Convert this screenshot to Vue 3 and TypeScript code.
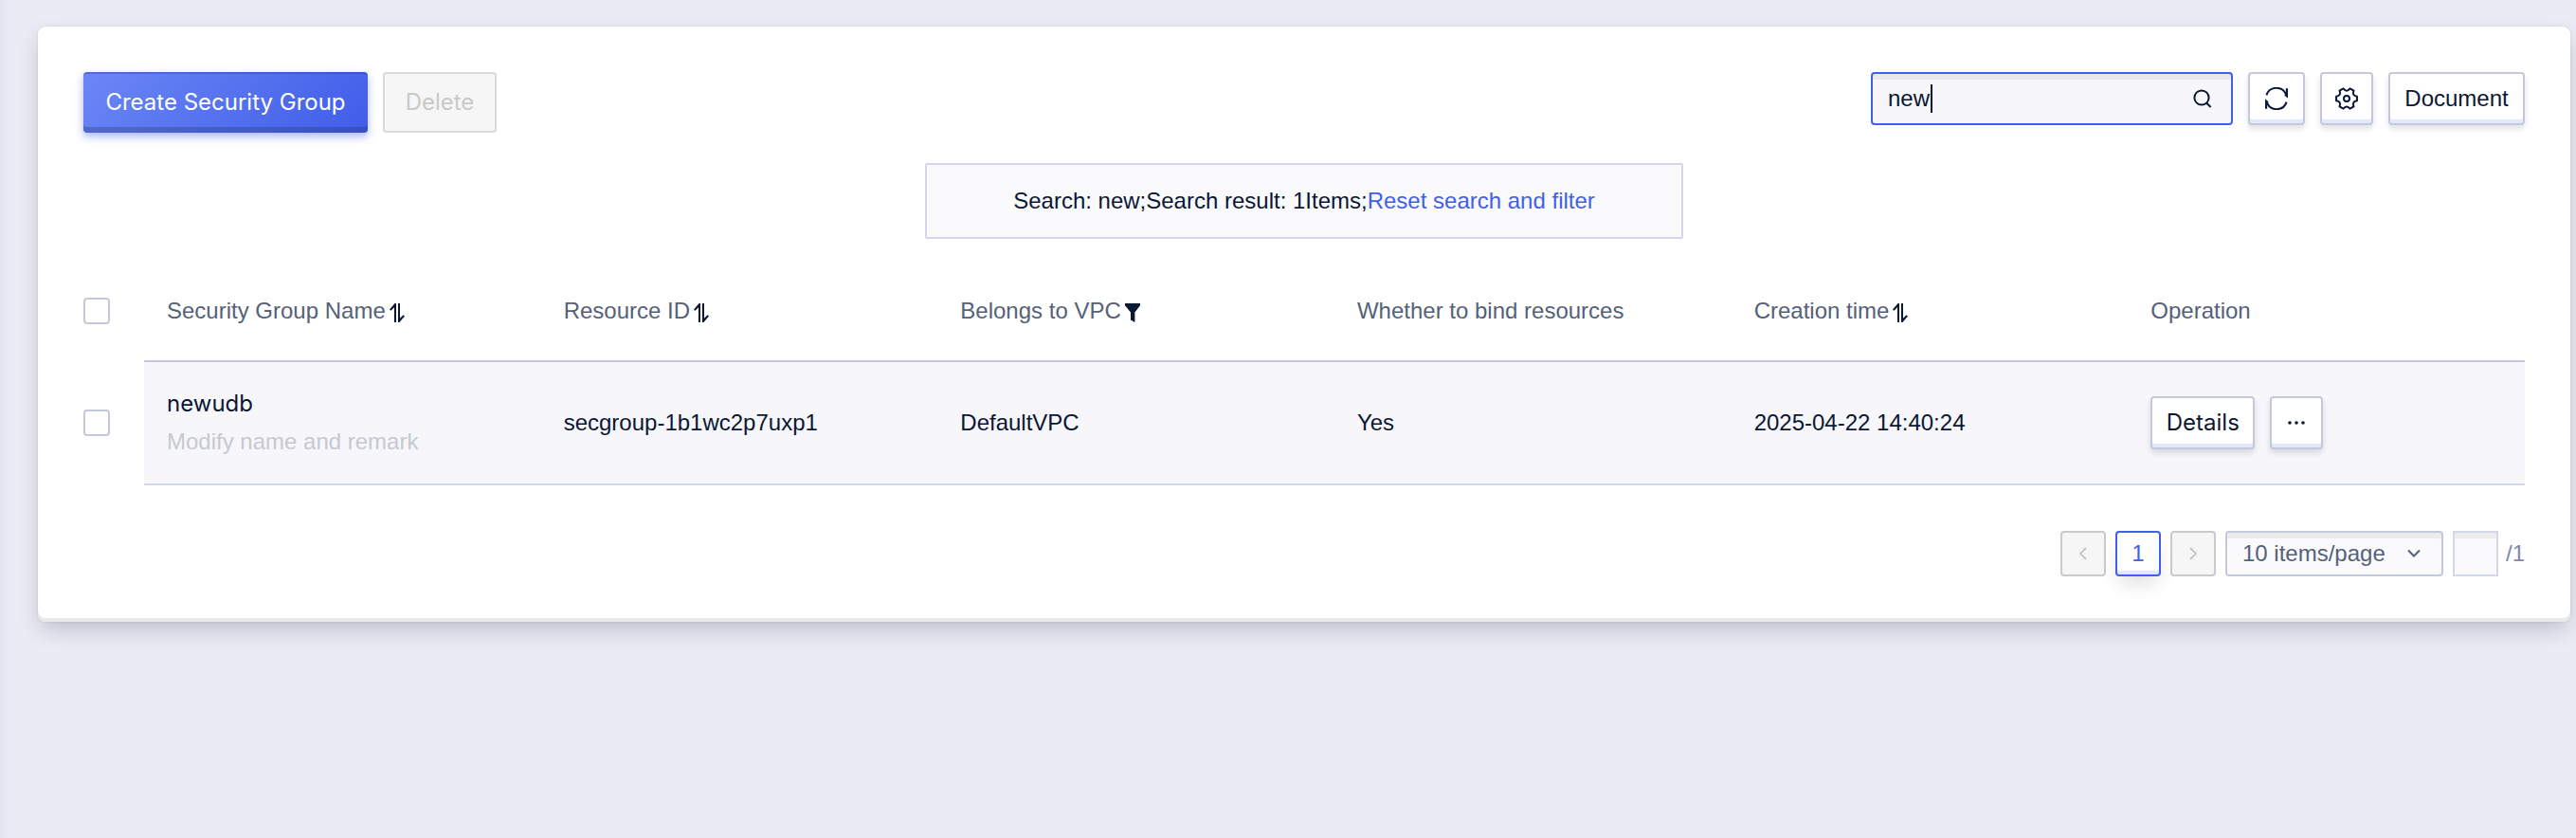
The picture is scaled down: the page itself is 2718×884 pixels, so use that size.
<script setup lang="ts">
import { ref, computed, onMounted, watch } from 'vue'

interface Column {
  key: string
  label: string
  icon?: 'sort' | 'filter'
}

interface SecurityGroup {
  name: string
  id: string
  vpc: string
  bound: string
  created: string
  checked: boolean
}

const columns: Column[] = [
  { key: 'name', label: 'Security Group Name', icon: 'sort' },
  { key: 'id', label: 'Resource ID', icon: 'sort' },
  { key: 'vpc', label: 'Belongs to VPC', icon: 'filter' },
  { key: 'bound', label: 'Whether to bind resources' },
  { key: 'created', label: 'Creation time', icon: 'sort' },
  { key: 'operation', label: 'Operation' },
]

const groups = ref<SecurityGroup[]>([
  {
    name: 'newudb',
    id: 'secgroup-1b1wc2p7uxp1',
    vpc: 'DefaultVPC',
    bound: 'Yes',
    created: '2025-04-22 14:40:24',
    checked: false,
  },
])

const keyword = ref('new')
const pageSize = ref(10)
const jumpTo = ref('')
const searchInput = ref<HTMLInputElement | null>(null)
const caretLeft = ref(0)
const focused = ref(false)

const visible = computed(() => groups.value.filter((g) => g.name.includes(keyword.value)))
const allChecked = computed({
  get: () => visible.value.length > 0 && visible.value.every((g) => g.checked),
  set: (value: boolean) => visible.value.forEach((g) => (g.checked = value)),
})
const noneChecked = computed(() => !groups.value.some((g) => g.checked))

// Places the custom caret behind the text that precedes the selection.
function placeCaret() {
  const el = searchInput.value
  const ctx = document.createElement('canvas').getContext('2d')
  if (!el || !ctx) return
  ctx.font = getComputedStyle(el).font
  const before = el.value.slice(0, el.selectionEnd ?? el.value.length)
  caretLeft.value = Math.ceil(ctx.measureText(before).width)
}

watch(keyword, placeCaret, { flush: 'post' })

onMounted(() => {
  const el = searchInput.value
  if (el) {
    el.focus()
    el.setSelectionRange(el.value.length, el.value.length)
    focused.value = true
    placeCaret()
  }
})
</script>

<template>
  <main class="page">
    <section class="card">
      <div class="toolbar">
        <div class="group">
          <button type="button" class="primary">Create Security Group</button>
          <button type="button" class="disabled-btn" :disabled="noneChecked">Delete</button>
        </div>
        <div class="group tools">
          <div class="search">
            <div class="field">
              <input
                ref="searchInput"
                v-model="keyword"
                type="text"
                aria-label="Search"
                @focus="focused = true"
                @blur="focused = false"
                @keyup="placeCaret"
                @click="placeCaret"
              />
              <span v-if="focused" class="caret" :style="{ left: caretLeft + 'px' }"></span>
            </div>
            <button type="button" class="search-btn" aria-label="Search">
              <svg width="20" height="20" viewBox="0 0 20 20" fill="none" stroke="currentColor" stroke-width="2">
                <circle cx="9" cy="9" r="7.6" />
                <path d="M14 14.5 18.6 19" />
              </svg>
            </button>
          </div>
          <button type="button" class="btn refresh" aria-label="Refresh">
            <svg width="24" height="24" viewBox="0 0 24 24" fill="none" stroke="currentColor" stroke-width="2">
              <path d="M1.4 8.4A11 11 0 0 1 22 7.6M22.6 15.6A11 11 0 0 1 2 16.4" />
              <path d="M21.8 1.2H24V11.6L20.4 8.8 21.8 7ZM2.2 22.8H0V12.4L3.6 15.2 2.2 17Z" fill="currentColor" stroke="none" />
            </svg>
          </button>
          <button type="button" class="btn settings" aria-label="Settings">
            <svg width="24" height="24" viewBox="0 0 24 24" fill="none" stroke="currentColor" stroke-width="2" stroke-linejoin="round">
              <path d="M22.96 14.33Q17.28 15.05 19.49 20.32L15.46 22.65Q12 18.1 8.54 22.65L4.51 20.32Q6.72 15.05 1.04 14.33V9.67Q6.72 8.95 4.51 3.68L8.54 1.35Q12 5.9 15.46 1.35L19.49 3.68Q17.28 8.95 22.96 9.67Z" />
              <circle cx="12" cy="12" r="3" />
            </svg>
          </button>
          <button type="button" class="btn document">Document</button>
        </div>
      </div>

      <p class="notice">
        Search: {{ keyword }};Search result: {{ visible.length }}Items;<a href="#" @click.prevent="keyword = ''">Reset search and filter</a>
      </p>

      <table>
        <thead>
          <tr>
            <th class="select-cell"><input v-model="allChecked" type="checkbox" aria-label="Select all" /></th>
            <th v-for="col in columns" :key="col.key" scope="col">
              <span class="head">
                {{ col.label }}
                <button v-if="col.icon" type="button" class="head-btn" :aria-label="`${col.icon} ${col.label}`">
                  <svg v-if="col.icon === 'sort'" width="16" height="20" viewBox="0 0 16 20" fill="currentColor">
                    <path d="M7 0V20H5V4.2L1.4 7.8 0 6.4 5.6 0ZM9 20V0H11V15.8L14.6 12.2 16 13.6 10.4 20Z" />
                  </svg>
                  <svg v-else width="16" height="20" viewBox="0 0 16 20" fill="currentColor">
                    <path d="M0 0H16V2.2L10.4 9.4V20L6 17.6V9.4L0 2.2Z" />
                  </svg>
                </button>
              </span>
            </th>
          </tr>
        </thead>
        <tbody>
          <tr v-for="g in visible" :key="g.id">
            <td class="select-cell"><input v-model="g.checked" type="checkbox" :aria-label="`Select ${g.name}`" /></td>
            <td>
              <div class="name">{{ g.name }}</div>
              <div class="remark">Modify name and remark</div>
            </td>
            <td>{{ g.id }}</td>
            <td>{{ g.vpc }}</td>
            <td>{{ g.bound }}</td>
            <td>{{ g.created }}</td>
            <td>
              <div class="group">
                <button type="button" class="btn details">Details</button>
                <button type="button" class="btn more" aria-label="More">
                  <svg width="18" height="4" viewBox="0 0 18 4" fill="currentColor">
                    <circle cx="2" cy="2" r="1.8" />
                    <circle cx="9" cy="2" r="1.8" />
                    <circle cx="16" cy="2" r="1.8" />
                  </svg>
                </button>
              </div>
            </td>
          </tr>
        </tbody>
      </table>

      <nav class="pager" aria-label="Pagination">
        <button type="button" class="page-btn" disabled aria-label="Previous page">
          <svg width="8" height="14" viewBox="0 0 8 14" fill="none" stroke="currentColor" stroke-width="2"><path d="M7 1 1 7 7 13" /></svg>
        </button>
        <button type="button" class="page-btn current" aria-current="page">1</button>
        <button type="button" class="page-btn" disabled aria-label="Next page">
          <svg width="8" height="14" viewBox="0 0 8 14" fill="none" stroke="currentColor" stroke-width="2"><path d="M1 1 7 7 1 13" /></svg>
        </button>
        <div class="size">
          <select v-model="pageSize" aria-label="Items per page">
            <option :value="10">10 items/page</option>
            <option :value="20">20 items/page</option>
            <option :value="50">50 items/page</option>
          </select>
          <svg width="14" height="10" viewBox="0 0 14 10" fill="none" stroke="currentColor" stroke-width="2"><path d="M1 1.5 7 7.5 13 1.5" /></svg>
        </div>
        <div class="jump-group">
          <input id="jump" v-model="jumpTo" class="jump" type="text" />
          <label class="total" for="jump">/1</label>
        </div>
      </nav>
    </section>
  </main>
</template>

<style>
html,
body {
  min-height: 100%;
  background: #eaebf4;
}
</style>

<style scoped>
.page {
  box-sizing: border-box;
  min-height: 100vh;
  padding: 28px 6px 28px 40px;
  background: linear-gradient(90deg, #e0e3f0, #eaebf4 8px);
  color: #0b1733;
  font-family: "Liberation Sans", Arial, sans-serif;
  font-size: 24px;
  line-height: 32px;
}

.page *,
.page *::before {
  box-sizing: border-box;
}

button,
input,
select {
  margin: 0;
  color: inherit;
  font: inherit;
}

svg {
  display: block;
  flex: none;
}

.card {
  padding: 48px;
  border-radius: 8px;
  background: #fff;
  box-shadow: inset 0 -4px 0 #e9e9e9, 0 0 2px rgba(30, 40, 80, 0.16), 0 10px 24px -4px rgba(20, 25, 50, 0.24);
}

.toolbar {
  display: flex;
  align-items: flex-start;
  justify-content: space-between;
}

.group {
  display: flex;
  gap: 16px;
}

.primary,
.disabled-btn,
.details,
.name {
  font-family: Inter, "Liberation Sans", sans-serif;
}

.primary,
.disabled-btn {
  height: 64px;
  border-radius: 4px;
  white-space: nowrap;
}

.primary {
  min-width: 300px;
  padding: 0 20px;
  border: 0;
  background: linear-gradient(135deg, #6c87f5, #3f5de9);
  color: #fff;
  box-shadow: inset 0 2px 0 rgba(40, 50, 110, 0.3), inset 0 -6px 0 rgba(40, 50, 110, 0.3), 0 4px 8px rgba(65, 90, 235, 0.45);
}

.disabled-btn {
  min-width: 120px;
  padding: 0 20px;
  border: 2px solid #d9d9d9;
  background: #f6f6f6;
  color: #c9c9c9;
}

.btn {
  display: flex;
  align-items: center;
  justify-content: center;
  height: 56px;
  padding: 0;
  border: 2px solid #c3c9da;
  border-radius: 4px;
  background: #fff;
  color: #0b1733;
  box-shadow: inset 0 -4px 0 #e3e8fd, 0 4px 6px rgba(0, 0, 0, 0.12);
}

.refresh {
  width: 60px;
}

.settings,
.more {
  width: 56px;
}

.document {
  min-width: 144px;
}

.details {
  min-width: 110px;
}

.search {
  display: flex;
  align-items: center;
  width: 382px;
  height: 56px;
  padding: 0 20px 0 16px;
  border: 2px solid #3f5fec;
  border-radius: 4px;
  background: #f6f6fb;
  box-shadow: inset 0 6px 0 #e8e8ed;
}

.field {
  position: relative;
  flex: 1;
  min-width: 0;
}

.field input {
  display: block;
  width: 100%;
  height: 44px;
  padding: 0;
  border: 0;
  outline: 0;
  background: transparent;
  caret-color: transparent;
}

.caret {
  position: absolute;
  top: 7px;
  width: 2px;
  height: 30px;
  background: #0b1733;
}

.search-btn,
.head-btn {
  padding: 0;
  border: 0;
  background: none;
}

.notice {
  width: 800px;
  max-width: 100%;
  margin: 32px auto 24px;
  padding: 22px;
  border: 2px solid #d3d7ea;
  border-radius: 2px;
  background: #fafafd;
  text-align: center;
}

.notice a {
  color: #3f5fec;
  text-decoration: none;
}

table {
  width: 100%;
  border-collapse: separate;
  border-spacing: 0;
  table-layout: fixed;
}

th,
td {
  padding: 0 24px;
  border-bottom: 2px solid #d3d7ea;
  text-align: left;
}

th {
  height: 106px;
  border-color: #c3c9da;
  color: #556179;
  font-weight: 400;
}

td {
  height: 130px;
  background: #f6f6fb;
}

.select-cell {
  width: 64px;
  padding: 0;
  border-color: transparent;
  background: none;
}

input[type="checkbox"] {
  display: block;
  width: 28px;
  height: 28px;
  border: 2px solid #c3c9da;
  border-radius: 4px;
  background: #fff;
  appearance: none;
}

input[type="checkbox"]:checked {
  border-color: #3f5fec;
  background: #3f5fec;
}

.head {
  display: flex;
  align-items: center;
  gap: 4px;
  white-space: nowrap;
}

.head-btn {
  padding-top: 4px;
  color: #0b1733;
}

.remark {
  margin-top: 8px;
  color: #c6c9d2;
}

.pager {
  display: flex;
  justify-content: flex-end;
  gap: 10px;
  margin-top: 48px;
  line-height: 48px;
}

.page-btn {
  display: flex;
  align-items: center;
  justify-content: center;
  width: 48px;
  height: 48px;
  padding: 0;
  border: 2px solid #cacaca;
  border-radius: 4px;
  background: #f6f6f6;
  color: #c9c9c9;
}

.current {
  border-color: #3f5fec;
  background: #fff;
  color: #3f5fec;
  box-shadow: inset 0 -4px 0 #e3e8fd, 0 12px 20px -4px rgba(0, 0, 0, 0.12);
}

.size {
  display: flex;
  align-items: center;
  width: 230px;
  height: 48px;
  padding-right: 22px;
  border: 2px solid #c3c9da;
  border-radius: 4px;
  background: #fafafd;
  color: #556179;
  box-shadow: inset 0 6px 0 #ececef;
}

.size select {
  flex: 1;
  min-width: 0;
  padding: 0 0 0 16px;
  border: 0;
  outline: 0;
  background: transparent;
  appearance: none;
}

.jump-group {
  display: flex;
  gap: 8px;
}

.jump {
  width: 48px;
  height: 48px;
  padding: 0 8px;
  border: 2px solid #d3d7ea;
  background: #fafafd;
  box-shadow: inset 0 6px 0 #ececef;
}

.total {
  color: #7c89a8;
}
</style>
